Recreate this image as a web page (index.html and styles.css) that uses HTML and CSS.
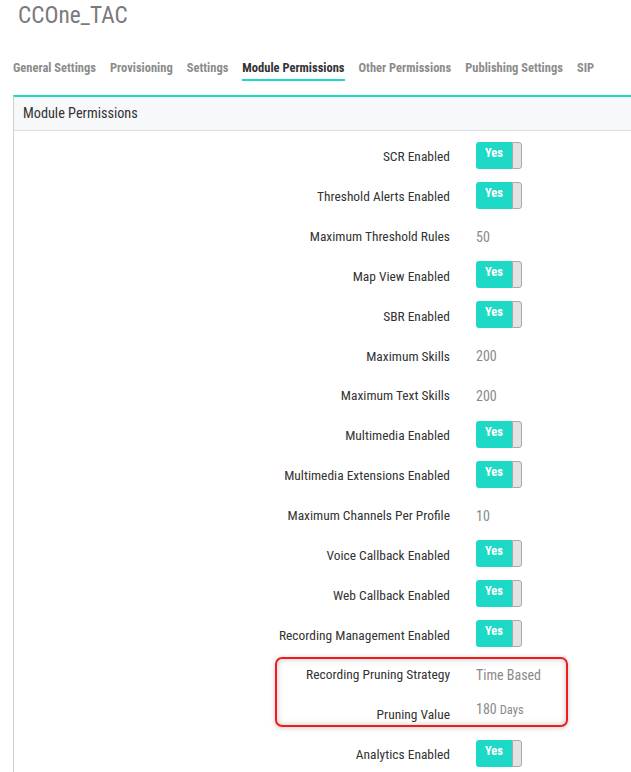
FILE: index.html
```html
<!DOCTYPE html>
<html lang="en">
<head>
<meta charset="utf-8">
<title>CCOne_TAC</title>
<link rel="stylesheet" href="styles.css">
</head>
<body>
<h1 class="title">CCOne_TAC</h1>
<nav class="tabs">
  <a class="tab">General Settings</a>
  <a class="tab">Provisioning</a>
  <a class="tab">Settings</a>
  <a class="tab active">Module Permissions</a>
  <a class="tab">Other Permissions</a>
  <a class="tab">Publishing Settings</a>
  <a class="tab">SIP</a>
</nav>
<section class="panel">
  <header class="panel-head">Module Permissions</header>
  <div class="panel-body">
    <div class="row"><div class="label">SCR Enabled</div><div class="value"><span class="switch"><span class="on">Yes</span><span class="knob"></span></span></div></div>
    <div class="row"><div class="label">Threshold Alerts Enabled</div><div class="value"><span class="switch"><span class="on">Yes</span><span class="knob"></span></span></div></div>
    <div class="row"><div class="label">Maximum Threshold Rules</div><div class="value text">50</div></div>
    <div class="row"><div class="label">Map View Enabled</div><div class="value"><span class="switch"><span class="on">Yes</span><span class="knob"></span></span></div></div>
    <div class="row"><div class="label">SBR Enabled</div><div class="value"><span class="switch"><span class="on">Yes</span><span class="knob"></span></span></div></div>
    <div class="row"><div class="label">Maximum Skills</div><div class="value text">200</div></div>
    <div class="row"><div class="label">Maximum Text Skills</div><div class="value text">200</div></div>
    <div class="row"><div class="label">Multimedia Enabled</div><div class="value"><span class="switch"><span class="on">Yes</span><span class="knob"></span></span></div></div>
    <div class="row"><div class="label">Multimedia Extensions Enabled</div><div class="value"><span class="switch"><span class="on">Yes</span><span class="knob"></span></span></div></div>
    <div class="row"><div class="label">Maximum Channels Per Profile</div><div class="value text">10</div></div>
    <div class="row"><div class="label">Voice Callback Enabled</div><div class="value"><span class="switch"><span class="on">Yes</span><span class="knob"></span></span></div></div>
    <div class="row"><div class="label">Web Callback Enabled</div><div class="value"><span class="switch"><span class="on">Yes</span><span class="knob"></span></span></div></div>
    <div class="row"><div class="label">Recording Management Enabled</div><div class="value"><span class="switch"><span class="on">Yes</span><span class="knob"></span></span></div></div>
    <div class="row"><div class="label">Recording Pruning Strategy</div><div class="value text">Time Based</div></div>
    <div class="row"><div class="label">Pruning Value</div><div class="value text raised">180 <small class="unit">Days</small></div></div>
    <div class="row"><div class="label">Analytics Enabled</div><div class="value"><span class="switch"><span class="on">Yes</span><span class="knob"></span></span></div></div>
  </div>
</section>
<div class="highlight"></div>
</body>
</html>
```
FILE: styles.css
```css
html, body {
  margin: 0;
  padding: 0;
  overflow: hidden;
  background: #ffffff;
}
body {
  position: relative;
  width: 631px;
  height: 772px;
  font-family: "Roboto Condensed", Roboto, "Liberation Sans", sans-serif;
  color: #333;
}
.title {
  margin: 2px 0 0 18px;
  font-size: 23.3px;
  line-height: 27px;
  font-weight: 400;
  color: #7a7a7a;
}
.tabs {
  display: flex;
  gap: 14px;
  margin: 30px 0 0 13px;
  white-space: nowrap;
}
.tab {
  font-size: 12.5px;
  font-weight: 700;
  color: #8c8c8c;
  line-height: 18px;
  padding-bottom: 2px;
  border-bottom: 2px solid transparent;
}
.tab.active {
  color: #333;
  border-bottom-color: #1ed9c6;
}
.panel {
  margin: 14px 0 0 13px;
  width: 700px;
  border-top: 2px solid #1ed9c6;
  border-left: 1px solid #cfcfcf;
}
.panel-head {
  background: #f7f8fa;
  height: 33px;
  border-bottom: 1px solid #dcdcdc;
  padding-left: 9px;
  font-size: 14.25px;
  line-height: 33px;
  color: #333;
}
.panel-body {
  padding-top: 6px;
  padding-bottom: 20px;
}
.row {
  display: flex;
  align-items: center;
  height: 39.85px;
}
.label {
  width: 436px;
  text-align: right;
  font-size: 13.45px;
  color: #333;
  white-space: nowrap;
}
.value {
  margin-left: 26px;
  display: flex;
  align-items: center;
}
.value.text {
  font-size: 14px;
  color: #8a8a8a;
}
.value.raised {
  margin-top: -11px;
  align-items: baseline;
}
.unit {
  font-size: 12.5px;
  margin-left: 3px;
}
.switch {
  display: flex;
  height: 27px;
  margin-top: -3px;
}
.on {
  width: 36px;
  background: #1ed9c6;
  color: #fff;
  font-weight: 700;
  font-size: 12.5px;
  line-height: 22px;
  text-align: center;
  border-radius: 3px 0 0 3px;
}
.knob {
  width: 8px;
  background: #e3e3e3;
  border: 1px solid #a9a9a9;
  border-radius: 0 3px 3px 0;
}
.highlight {
  position: absolute;
  left: 275px;
  top: 657px;
  width: 289px;
  height: 66px;
  border: 2px solid #f41a1a;
  border-radius: 7px;
  box-shadow: inset 0 0 6px rgba(0, 0, 0, 0.22), 0 1px 5px rgba(0, 0, 0, 0.22);
  pointer-events: none;
}
```
